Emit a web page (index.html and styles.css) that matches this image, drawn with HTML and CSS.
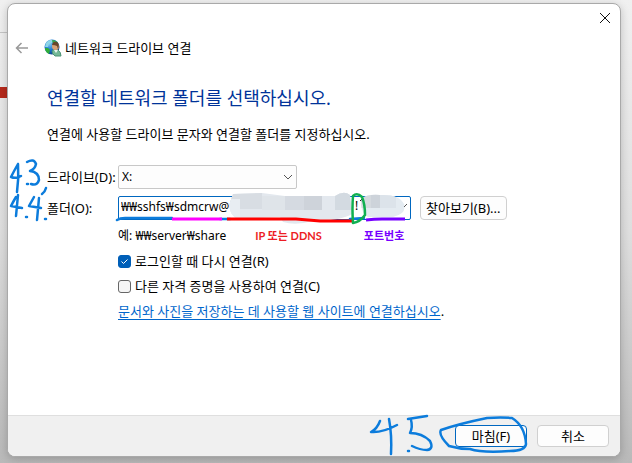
FILE: index.html
```html
<!DOCTYPE html>
<html lang="ko">
<head>
    <meta charset="UTF-8">
    <title>네트워크 드라이브 연결</title>
    <link rel="stylesheet" href="styles.css">
</head>
<body>
<main class="dialog">
    <div class="titlebar">
        <button class="close" type="button" aria-label="닫기">
            <svg width="12" height="12" viewBox="0 0 12 12"><path d="M1 1L11 11M11 1L1 11"/></svg>
        </button>
    </div>
    <header class="header">
        <button class="back" type="button" aria-label="뒤로">
            <svg width="14" height="12" viewBox="0 0 14 12"><path d="M13 6H2M6.5 1L1.5 6L6.5 11"/></svg>
        </button>
        <svg class="logo" width="18" height="18" viewBox="0 0 18 18">
            <defs>
                <radialGradient id="globe" cx="0.35" cy="0.3" r="0.8">
                    <stop offset="0" stop-color="#7cc8f4"/>
                    <stop offset="0.5" stop-color="#1a72cc"/>
                    <stop offset="1" stop-color="#0a3484"/>
                </radialGradient>
            </defs>
            <circle cx="8" cy="8" r="7.5" fill="url(#globe)"/>
            <path d="M2 4Q5 0 9 1L8 4L5 5L4 8L1 8Z" fill="#8fd6e8"/>
            <path d="M1 9L4 9L6 11L5 15Q1 13 1 9Z" fill="#2fae3a"/>
            <path d="M8 1Q12 1 14 4L9 5Z" fill="#37a447"/>
            <path d="M8 12Q10 9 14 11Q17 13 17 17L11 17Q8 15 8 12Z" fill="#74b896" stroke="#4c9375"/>
            <circle cx="11.5" cy="7.5" r="3.5" fill="#d7a077"/>
            <path d="M8 6Q9 2 13 3Q16 5 14 10L13 7Q11 6 8 6Z" fill="#68442a"/>
            <path d="M10 11L12 14L14 11Z" fill="#e9f4ee"/>
        </svg>
        <span>네트워크 드라이브 연결</span>
    </header>

    <form class="content">
        <h1>연결할 네트워크 폴더를 선택하십시오.</h1>
        <p class="desc">연결에 사용할 드라이브 문자와 연결할 폴더를 지정하십시오.</p>

        <div class="fields">
            <label for="drive">드라이브(D):</label>
            <div class="drive">
                <select id="drive"><option>X:</option></select>
                <svg class="chevron" width="10" height="6" viewBox="0 0 10 6"><path d="M1 1L5 5L9 1"/></svg>
            </div>

            <label for="folder">폴더(O):</label>
            <div class="folder">
                <input id="folder" type="text" value="₩₩sshfs₩sdmcrw@">
                <button class="btn" type="button">찾아보기(B)...</button>
            </div>

            <div class="example">
                <span>예: ₩₩server₩share</span>
                <b class="note note-ip">IP 또는 DDNS</b>
                <b class="note note-port">포트번호</b>
            </div>

            <div class="check">
                <input id="reconnect" type="checkbox" checked>
                <label for="reconnect">로그인할 때 다시 연결(R)</label>
            </div>
            <div class="check">
                <input id="other" type="checkbox">
                <label for="other">다른 자격 증명을 사용하여 연결(C)</label>
            </div>
            <div class="link"><a href="#">문서와 사진을 저장하는 데 사용할 웹 사이트에 연결하십시오</a>.</div>

            <!-- пометки от руки поверх полей -->
            <svg class="marks marks-form" width="410" height="66" viewBox="9 160 410 66">
                <defs>
                    <clipPath id="blob-ip"><path d="M233 194L262 193L285 196L335 196Q344 190 350 195L352 214Q340 221 312 221Q296 226 283 222L280 217L238 219Q230 216 229 205Z"/></clipPath>
                    <clipPath id="blob-port"><path d="M362 199Q366 194 380 195Q399 194 404 204Q407 214 393 217L368 217Q359 211 362 199Z"/></clipPath>
                </defs>
                <g clip-path="url(#blob-ip)">
                    <path d="M220 190H354V226H220Z" fill="#e3e8ee"/>
                    <path d="M230 190H262V209H230Z" fill="#d8dde3"/>
                    <path d="M285 196H304V210H285Z" fill="#d5dae1"/>
                    <path d="M304 196H322V210H304Z" fill="#ced3da"/>
                    <path d="M335 190H354V210H335Z" fill="#d3dae1"/>
                    <path d="M224 199H240V218H224Z" fill="#e8edf2"/>
                    <path d="M262 196H285V210H262Z" fill="#dfe4e9"/>
                </g>
                <path d="M360 201L362 199V202" stroke="#222" fill="none"/>
                <g clip-path="url(#blob-port)">
                    <path d="M358 190H408V220H358Z" fill="#e4ebf1"/>
                    <path d="M358 190H371V208H358Z" fill="#d5dadf"/>
                    <path d="M371 194H380V208H371Z" fill="#cdd3da"/>
                    <path d="M380 194H396V208H380Z" fill="#dce3ea"/>
                </g>
                <path d="M404 207L407 204" stroke="#555" fill="none"/>
                <text x="355" y="210">!</text>
                <path class="pen" d="M18 164Q14 171 11 177Q16 179 21 176M18 164Q19 178 17 192M27 162Q34 158 36 164Q35 169 30 171Q39 172 39 180Q37 186 31 184M27 184L28 184M46 188Q45 192 42 194"/>
                <path class="pen" d="M16 197Q13 202 11 206L22 208M18 195L16 216M26 217L27 217M34 197L29 206L41 208M39 198L37 220M45 219L46 219"/>
                <path class="pen" d="M117 220Q120 218 125 218L172 218M220 219H230M350 219L364 218"/>
                <path class="line magenta" d="M172 219H222"/>
                <path class="line red" d="M227 219L296 219L320 221L354 221"/>
                <path class="line violet" d="M366 220Q374 219 382 219L405 219"/>
                <path class="pen green" d="M353 196Q357 192 362 197Q365 204 365 215Q360 222 353 223Q352 208 353 196"/>
            </svg>
        </div>
    </form>

    <footer class="footer">
        <button class="btn primary" type="button">마침(F)</button>
        <button class="btn" type="button">취소</button>
        <svg class="marks marks-footer" width="165" height="44" viewBox="367 413 165 44">
            <path class="pen" d="M380 421Q377 429 371 432Q382 433 397 425M389 419Q392 435 391 454M408 451L409 451M408 419L427 416M411 420Q413 427 410 433Q422 433 430 441Q434 449 427 450Q420 450 412 446"/>
            <path class="pen" d="M487 418Q458 424 441 430Q438 435 449 446Q459 449 470 449Q482 453 510 451Q525 451 526 444Q525 426 512 418Q501 417 487 418"/>
        </svg>
    </footer>
</main>
</body>
</html>
```
FILE: styles.css
```css
* {
    box-sizing: border-box;
}

body {
    margin: 0;
    min-height: 100vh;
    display: flex;
    padding: 3px 11px 6px 7px;
    font: 13px/18px "Noto Sans", "Noto Sans CJK KR", sans-serif;
    color: #000;
    background:
        linear-gradient(#b52a1c, #b52a1c) 0 87px / 8px 11px no-repeat,
        linear-gradient(#c4c4c4, #c4c4c4) 0 32px / 8px 1px no-repeat,
        linear-gradient(#f0f0f0, #dedede 50%, #b9b9b9);
}

button, input, select {
    font: inherit;
    color: inherit;
}

.dialog {
    flex: 1;
    display: flex;
    flex-direction: column;
    background: #fff;
    border: 1px solid #a9a9a9;
    border-radius: 8px;
    box-shadow: 0 2px 8px rgba(0, 0, 0, 0.2);
}

.titlebar {
    display: flex;
    justify-content: flex-end;
    padding: 8px 9px 0;
}

.close, .back {
    display: flex;
    padding: 0;
    border: 0;
    background: none;
}

.close svg, .back svg {
    fill: none;
    stroke: #111;
}

.back svg {
    stroke: #999;
    stroke-width: 1.5;
}

.header {
    display: flex;
    align-items: center;
    padding: 15px 7px;
}

.logo {
    margin: 0 3px 0 15px;
}

.content {
    flex: 1;
    padding: 14px 39px 0;
}

h1 {
    margin: 0 0 15px;
    font-size: 18px;
    line-height: 24px;
    font-weight: 400;
    color: #003399;
}

.desc {
    margin: 0 0 22px;
}

.fields {
    position: relative;
    display: grid;
    grid-template-columns: 71px 1fr;
    align-items: center;
    row-gap: 7px;
}

.example, .check, .link {
    grid-column: 2;
}

.drive {
    position: relative;
    width: 179px;
}

.drive select {
    display: block;
    width: 100%;
    height: 24px;
    padding: 0 3px;
    appearance: none;
    border: 1px solid #c8c8c8;
    border-radius: 2px;
    background: #fdfdfd;
    font-size: 12px;
}

.chevron {
    position: absolute;
    right: 4px;
    top: 9px;
    fill: none;
    stroke: #555;
}

.folder {
    display: flex;
    align-items: center;
    gap: 9px;
}

.folder input {
    width: 293px;
    height: 24px;
    padding: 0 2px 3px;
    border: 1px solid #0067c0;
    border-radius: 2px;
    background: #fff;
    font-size: 12px;
}

.btn {
    height: 24px;
    padding: 0 5px;
    border: 1px solid #d0d0d0;
    border-radius: 4px;
    background: #fdfdfd;
    line-height: 20px;
    white-space: nowrap;
}

.example {
    display: flex;
    align-items: center;
    font-size: 12px;
}

.note {
    font-size: 11px;
}

.note-ip {
    margin-left: 29px;
    color: #ed1c24;
    font-family: Lato, "Noto Sans CJK KR", sans-serif;
}

.note-port {
    margin-left: 42px;
    color: #70f;
}

.check {
    display: flex;
    align-items: center;
    gap: 4px;
}

.check input {
    width: 13px;
    height: 13px;
    margin: 0;
    appearance: none;
    border: 1px solid #666;
    border-radius: 3px;
    background: #f5f5f5;
}

.check input:checked {
    border-color: #005fb8;
    background: #005fb8 url("data:image/svg+xml,%3Csvg xmlns='http://www.w3.org/2000/svg' viewBox='0 0 11 11'%3E%3Cpath d='M2.5 5.5L4.5 7.5L8.5 3.5' fill='none' stroke='white'/%3E%3C/svg%3E");
}

.link a {
    color: #0066cc;
    text-underline-offset: 3px;
}

.footer {
    position: relative;
    display: flex;
    justify-content: flex-end;
    gap: 10px;
    padding: 9px 11px;
    border-top: 1px solid #dfdfdf;
    border-radius: 0 0 7px 7px;
    background: #f0f0f0;
}

.footer .btn {
    width: 72px;
    height: 22px;
}

.footer .primary {
    border-color: #0067c0;
}

/* рисунки поверх окна */
.marks {
    position: absolute;
    overflow: visible;
    pointer-events: none;
    font-size: 12px;
}

.marks-form {
    left: -38px;
    top: -5px;
}

.marks-footer {
    right: 88px;
    top: -3px;
}

.pen {
    fill: none;
    stroke: #0c7cdc;
    stroke-width: 2.5;
    stroke-linecap: round;
    stroke-linejoin: round;
}

.line {
    fill: none;
    stroke-width: 3;
}

.green {
    stroke: #10b050;
}

.magenta {
    stroke: #f0f;
}

.red {
    stroke: #f00;
}

.violet {
    stroke: #70f;
}
```
